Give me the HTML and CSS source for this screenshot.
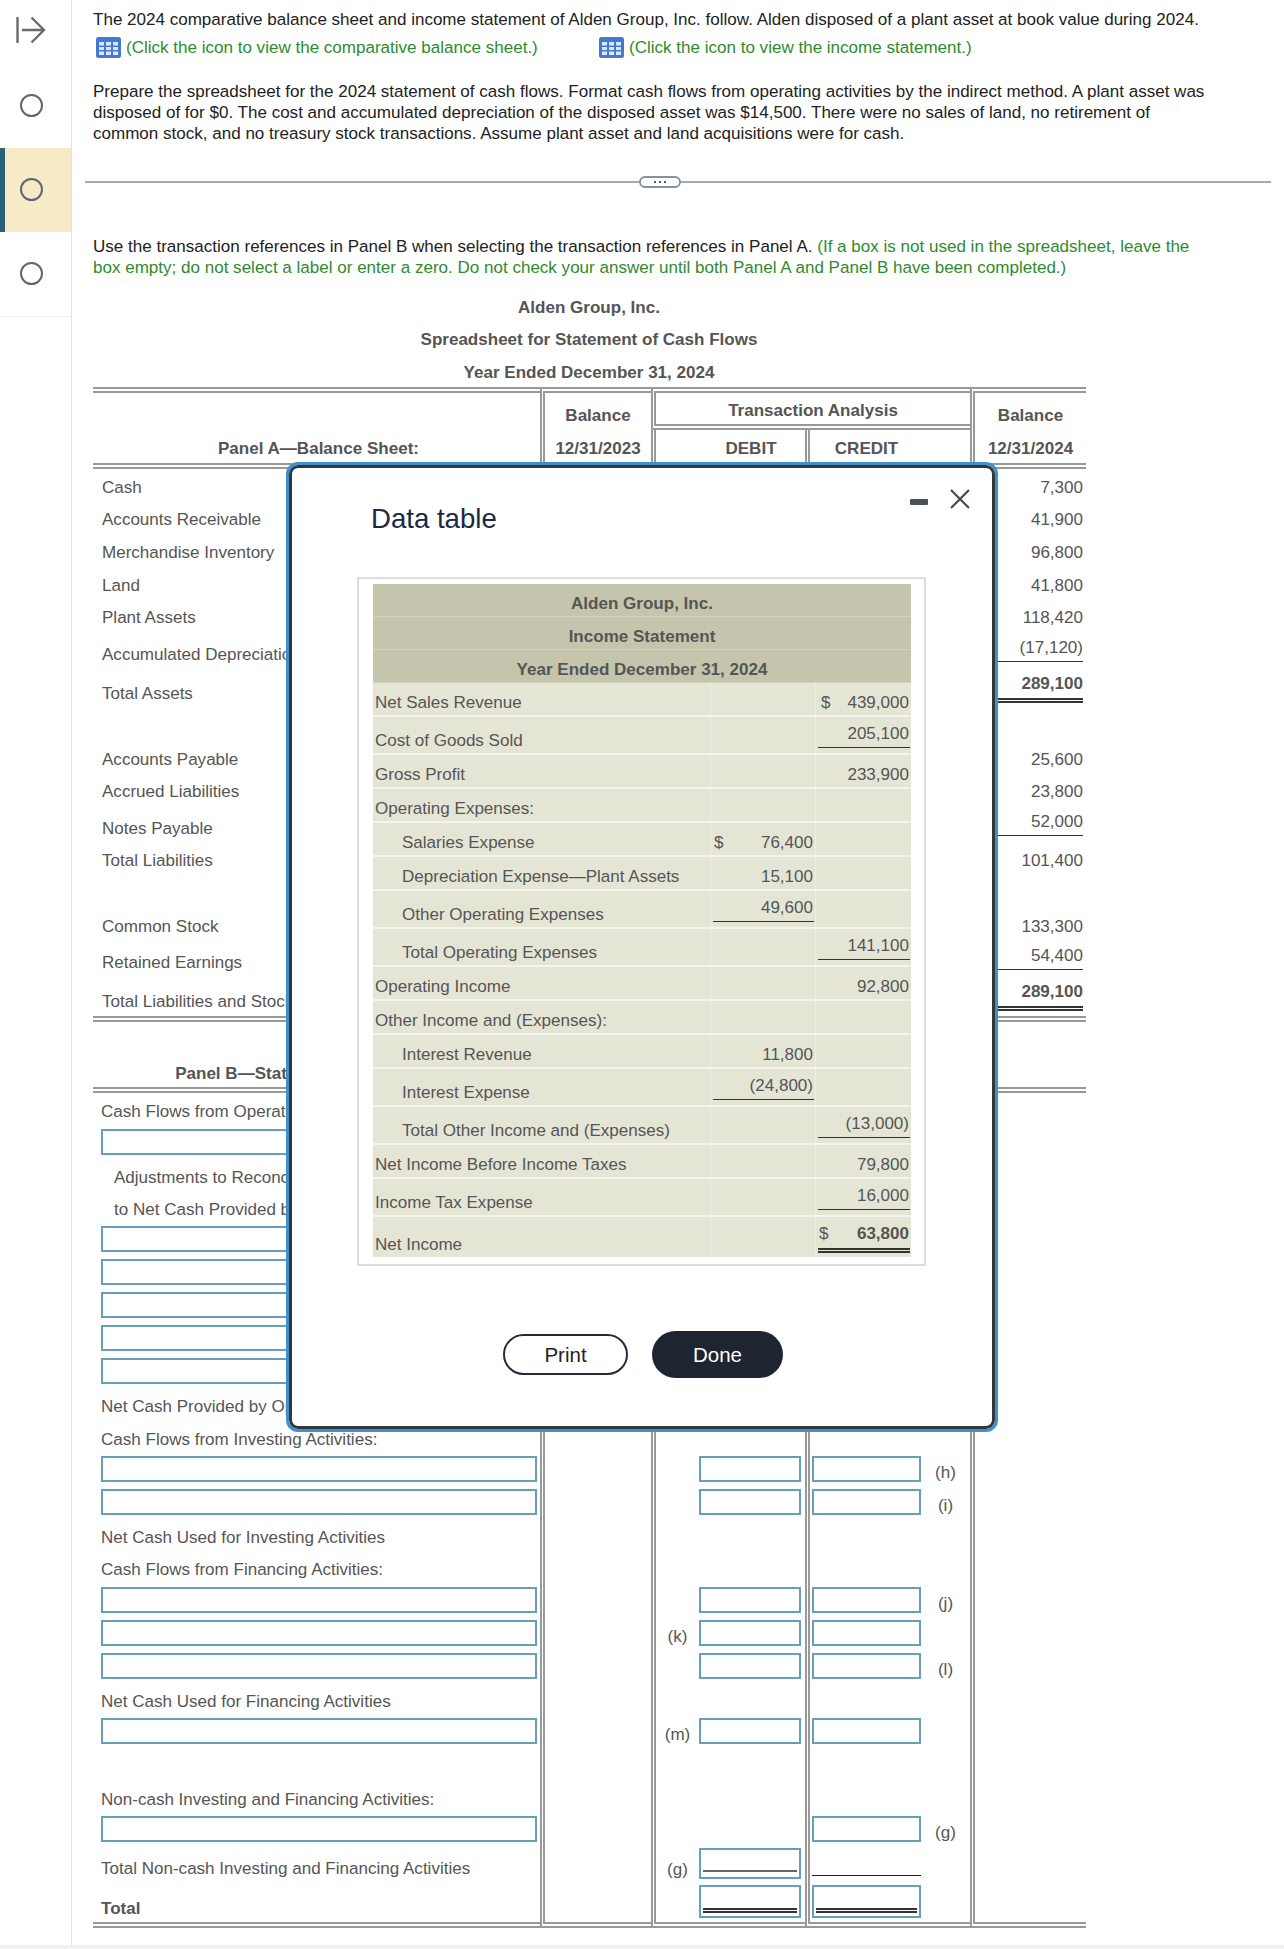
FILE: index.html
```html
<!DOCTYPE html>
<html lang="en">
<head>
  <meta charset="UTF-8">
  <title>Statement of Cash Flows Spreadsheet</title>
  <link rel="stylesheet" href="styles.css">
</head>
<body>
<div class="layout">

  <aside class="sidebar">
    <div class="side-toggle">
      <svg width="30" height="28" viewBox="0 0 30 28" fill="none" stroke="#666c72" stroke-width="2.4">
        <path d="M1.5 1V27M6 14H28M15.500 1.500L28 14L15.500 26.500"/>
      </svg>
    </div>
    <div class="side-item first"><span class="ring"></span></div>
    <div class="side-item active"><span class="ring"></span></div>
    <div class="side-item"><span class="ring"></span></div>
  </aside>

  <main class="content">
    <p class="intro">The 2024 comparative balance sheet and income statement of Alden Group, Inc. follow. Alden disposed of a plant asset at book value during 2024.</p>
    <div class="links">
      <div class="link link-first">
        <svg class="grid-icon" width="25" height="21" viewBox="0 0 25 21"><rect width="25" height="21" rx="2.500" fill="#4379d4"/><g fill="#dfe8fa"><rect x="3" y="5" width="5" height="3.500"/><rect x="10" y="5" width="5" height="3.500"/><rect x="17" y="5" width="5" height="3.500"/><rect x="3" y="10" width="5" height="3"/><rect x="10" y="10" width="5" height="3"/><rect x="17" y="10" width="5" height="3"/><rect x="3" y="14.500" width="5" height="3.500"/><rect x="10" y="14.500" width="5" height="3.500"/><rect x="17" y="14.500" width="5" height="3.500"/></g></svg>
        <span class="green">(Click the icon to view the comparative balance sheet.)</span>
      </div>
      <div class="link">
        <svg class="grid-icon" width="25" height="21" viewBox="0 0 25 21"><rect width="25" height="21" rx="2.500" fill="#4379d4"/><g fill="#dfe8fa"><rect x="3" y="5" width="5" height="3.500"/><rect x="10" y="5" width="5" height="3.500"/><rect x="17" y="5" width="5" height="3.500"/><rect x="3" y="10" width="5" height="3"/><rect x="10" y="10" width="5" height="3"/><rect x="17" y="10" width="5" height="3"/><rect x="3" y="14.500" width="5" height="3.500"/><rect x="10" y="14.500" width="5" height="3.500"/><rect x="17" y="14.500" width="5" height="3.500"/></g></svg>
        <span class="green">(Click the icon to view the income statement.)</span>
      </div>
    </div>

    <p class="prepare">Prepare the spreadsheet for the 2024 statement of cash flows. Format cash flows from operating activities by the indirect method. A plant asset was<br>disposed of for $0. The cost and accumulated depreciation of the disposed asset was $14,500. There were no sales of land, no retirement of<br>common stock, and no treasury stock transactions. Assume plant asset and land acquisitions were for cash.</p>

    <div class="divider">
      <span class="divider-line left"></span>
      <span class="pill"><i></i><i></i><i></i></span>
      <span class="divider-line"></span>
    </div>

    <p class="use-refs">Use the transaction references in Panel B when selecting the transaction references in Panel A. <span class="green">(If a box is not used in the spreadsheet, leave the<br>box empty; do not select a label or enter a zero. Do not check your answer until both Panel A and Panel B have been completed.)</span></p>

    <div class="sheet-title">
      <div>Alden Group, Inc.</div>
      <div>Spreadsheet for Statement of Cash Flows</div>
      <div>Year Ended December 31, 2024</div>
    </div>

    <table class="sheet">
      <colgroup>
        <col class="c-label"><col class="c-bal"><col class="c-debit"><col class="c-credit"><col class="c-bal2">
      </colgroup>
      <tr class="head-top">
        <th rowspan="2" class="top rule head-label">Panel A—Balance Sheet:</th>
        <th rowspan="2" class="top rule v head-stack"><div class="stack-a">Balance</div><div>12/31/2023</div></th>
        <th colspan="2" class="top rule v head-ta">Transaction Analysis</th>
        <th rowspan="2" class="top rule v head-stack"><div class="stack-a">Balance</div><div>12/31/2024</div></th>
      </tr>
      <tr class="head-sub">
        <th class="rule v head-dc head-debit">DEBIT</th>
        <th class="rule v head-dc head-credit">CREDIT</th>
      </tr>

      <tr class="h29"><td class="label">Cash</td><td class="v"></td><td class="v"></td><td class="v"></td><td class="v amt">7,300</td></tr>
      <tr class="h32"><td class="label">Accounts Receivable</td><td class="v"></td><td class="v"></td><td class="v"></td><td class="v amt">41,900</td></tr>
      <tr class="h33"><td class="label">Merchandise Inventory</td><td class="v"></td><td class="v"></td><td class="v"></td><td class="v amt">96,800</td></tr>
      <tr class="h33"><td class="label">Land</td><td class="v"></td><td class="v"></td><td class="v"></td><td class="v amt">41,800</td></tr>
      <tr class="h32"><td class="label">Plant Assets</td><td class="v"></td><td class="v"></td><td class="v"></td><td class="v amt">118,420</td></tr>
      <tr class="h37"><td class="label">Accumulated Depreciation—Plant Assets</td><td class="v"></td><td class="v"></td><td class="v"></td><td class="v amt"><div class="under">(17,120)</div></td></tr>
      <tr class="h39"><td class="label">Total Assets</td><td class="v"></td><td class="v"></td><td class="v"></td><td class="v amt"><div class="total">289,100</div></td></tr>
      <tr class="h33"><td></td><td class="v"></td><td class="v"></td><td class="v"></td><td class="v"></td></tr>
      <tr class="h33"><td class="label">Accounts Payable</td><td class="v"></td><td class="v"></td><td class="v"></td><td class="v amt">25,600</td></tr>
      <tr class="h32"><td class="label">Accrued Liabilities</td><td class="v"></td><td class="v"></td><td class="v"></td><td class="v amt">23,800</td></tr>
      <tr class="h37"><td class="label">Notes Payable</td><td class="v"></td><td class="v"></td><td class="v"></td><td class="v amt"><div class="under">52,000</div></td></tr>
      <tr class="h32"><td class="label">Total Liabilities</td><td class="v"></td><td class="v"></td><td class="v"></td><td class="v amt">101,400</td></tr>
      <tr class="h33"><td></td><td class="v"></td><td class="v"></td><td class="v"></td><td class="v"></td></tr>
      <tr class="h33"><td class="label">Common Stock</td><td class="v"></td><td class="v"></td><td class="v"></td><td class="v amt">133,300</td></tr>
      <tr class="h36"><td class="label">Retained Earnings</td><td class="v"></td><td class="v"></td><td class="v"></td><td class="v amt"><div class="under">54,400</div></td></tr>
      <tr class="h49"><td class="label rule pad4">Total Liabilities and Stockholders' Equity</td><td class="rule v"></td><td class="rule v"></td><td class="rule v"></td><td class="rule v amt pad4"><div class="total">289,100</div></td></tr>

      <tr class="h71"><td class="panel-b rule">Panel B—Statement of Cash Flows:</td><td class="rule v"></td><td class="rule v"></td><td class="rule v"></td><td class="rule v"></td></tr>
      <tr class="h29"><td class="label lb">Cash Flows from Operating Activities:</td><td class="v"></td><td class="v"></td><td class="v"></td><td class="v"></td></tr>
      <tr class="h37"><td><input class="box box-label"></td><td class="v"></td><td class="v"></td><td class="v"></td><td class="v"></td></tr>
      <tr class="h29"><td class="label indent">Adjustments to Reconcile Net Income</td><td class="v"></td><td class="v"></td><td class="v"></td><td class="v"></td></tr>
      <tr class="h32"><td class="label indent">to Net Cash Provided by Operating Activities:</td><td class="v"></td><td class="v"></td><td class="v"></td><td class="v"></td></tr>
      <tr class="h36"><td><input class="box box-label"></td><td class="v"></td><td class="v"></td><td class="v"></td><td class="v"></td></tr>
      <tr class="h33"><td><input class="box box-label"></td><td class="v"></td><td class="v"></td><td class="v"></td><td class="v"></td></tr>
      <tr class="h33"><td><input class="box box-label"></td><td class="v"></td><td class="v"></td><td class="v"></td><td class="v"></td></tr>
      <tr class="h33"><td><input class="box box-label"></td><td class="v"></td><td class="v"></td><td class="v"></td><td class="v"></td></tr>
      <tr class="h33"><td><input class="box box-label"></td><td class="v"></td><td class="v"></td><td class="v"></td><td class="v"></td></tr>
      <tr class="h29"><td class="label lb">Net Cash Provided by Operating Activities</td><td class="v"></td><td class="v"></td><td class="v"></td><td class="v"></td></tr>

      <tr class="h33"><td class="label lb">Cash Flows from Investing Activities:</td><td class="v"></td><td class="v"></td><td class="v"></td><td class="v"></td></tr>
      <tr class="h36"><td><input class="box box-label"></td><td class="v"></td>
        <td class="v"><div class="debit-entry"><span class="ref"></span><input class="box box-debit"></div></td>
        <td class="v"><div class="credit-entry"><input class="box box-credit"><span class="ref">(h)</span></div></td><td class="v"></td></tr>
      <tr class="h33"><td><input class="box box-label"></td><td class="v"></td>
        <td class="v"><div class="debit-entry"><span class="ref"></span><input class="box box-debit"></div></td>
        <td class="v"><div class="credit-entry"><input class="box box-credit"><span class="ref">(i)</span></div></td><td class="v"></td></tr>
      <tr class="h29"><td class="label lb">Net Cash Used for Investing Activities</td><td class="v"></td><td class="v"></td><td class="v"></td><td class="v"></td></tr>

      <tr class="h32"><td class="label lb">Cash Flows from Financing Activities:</td><td class="v"></td><td class="v"></td><td class="v"></td><td class="v"></td></tr>
      <tr class="h37"><td><input class="box box-label"></td><td class="v"></td>
        <td class="v"><div class="debit-entry"><span class="ref"></span><input class="box box-debit"></div></td>
        <td class="v"><div class="credit-entry"><input class="box box-credit"><span class="ref">(j)</span></div></td><td class="v"></td></tr>
      <tr class="h33"><td><input class="box box-label"></td><td class="v"></td>
        <td class="v"><div class="debit-entry"><span class="ref">(k)</span><input class="box box-debit"></div></td>
        <td class="v"><div class="credit-entry"><input class="box box-credit"><span class="ref"></span></div></td><td class="v"></td></tr>
      <tr class="h33"><td><input class="box box-label"></td><td class="v"></td>
        <td class="v"><div class="debit-entry"><span class="ref"></span><input class="box box-debit"></div></td>
        <td class="v"><div class="credit-entry"><input class="box box-credit"><span class="ref">(l)</span></div></td><td class="v"></td></tr>
      <tr class="h29"><td class="label lb">Net Cash Used for Financing Activities</td><td class="v"></td><td class="v"></td><td class="v"></td><td class="v"></td></tr>
      <tr class="h36"><td><input class="box box-label"></td><td class="v"></td>
        <td class="v"><div class="debit-entry"><span class="ref">(m)</span><input class="box box-debit"></div></td>
        <td class="v"><div class="credit-entry"><input class="box box-credit"><span class="ref"></span></div></td><td class="v"></td></tr>
      <tr class="h33"><td></td><td class="v"></td><td class="v"></td><td class="v"></td><td class="v"></td></tr>

      <tr class="h29"><td class="label lb">Non-cash Investing and Financing Activities:</td><td class="v"></td><td class="v"></td><td class="v"></td><td class="v"></td></tr>
      <tr class="h36"><td><input class="box box-label"></td><td class="v"></td><td class="v"></td>
        <td class="v"><div class="credit-entry"><input class="box box-credit"><span class="ref">(g)</span></div></td><td class="v"></td></tr>
      <tr class="h37"><td class="label lb pad4">Total Non-cash Investing and Financing Activities</td><td class="v"></td>
        <td class="v"><div class="debit-entry"><span class="ref ref-low">(g)</span><div class="box box-debit box-sub"><span class="sub-line"></span></div></div></td>
        <td class="v"><div class="credit-plain"></div></td><td class="v"></td></tr>
      <tr class="h45"><td class="label lb bold rule pad3">Total</td><td class="rule v"></td>
        <td class="rule v"><div class="debit-entry"><span class="ref"></span><div class="box box-debit box-tot"><span class="tot-line"></span></div></div></td>
        <td class="rule v"><div class="credit-entry"><div class="box box-credit box-tot"><span class="tot-line"></span></div><span class="ref"></span></div></td>
        <td class="rule v"></td></tr>
    </table>
  </main>
</div>

<!-- Data table popup, sits over the spreadsheet -->
<div class="modal">
  <div class="modal-head">
    <h2>Data table</h2>
    <div class="modal-tools">
      <span class="min-btn"></span>
      <svg width="20" height="20" viewBox="0 0 20 20" stroke="#414a56" stroke-width="2.200" fill="none"><path d="M1 1L19 19M19 1L1 19"/></svg>
    </div>
  </div>

  <div class="data-wrap">
    <table class="data">
      <colgroup><col class="d-label"><col class="d-debit"><col class="d-credit"></colgroup>
      <tr class="dh"><th colspan="3">Alden Group, Inc.</th></tr>
      <tr class="dh"><th colspan="3">Income Statement</th></tr>
      <tr class="dh"><th colspan="3">Year Ended December 31, 2024</th></tr>
      <tr class="d34"><td>Net Sales Revenue</td><td></td><td><div class="val"><span class="dollar">$</span><span>439,000</span></div></td></tr>
      <tr class="d38"><td>Cost of Goods Sold</td><td></td><td><div class="val line">205,100</div></td></tr>
      <tr class="d34"><td>Gross Profit</td><td></td><td><div class="val">233,900</div></td></tr>
      <tr class="d34"><td>Operating Expenses:</td><td></td><td></td></tr>
      <tr class="d34"><td class="sub">Salaries Expense</td><td><div class="val"><span>$</span><span>76,400</span></div></td><td></td></tr>
      <tr class="d34"><td class="sub">Depreciation Expense—Plant Assets</td><td><div class="val">15,100</div></td><td></td></tr>
      <tr class="d38"><td class="sub">Other Operating Expenses</td><td><div class="val line">49,600</div></td><td></td></tr>
      <tr class="d38"><td class="sub">Total Operating Expenses</td><td></td><td><div class="val line">141,100</div></td></tr>
      <tr class="d34"><td>Operating Income</td><td></td><td><div class="val">92,800</div></td></tr>
      <tr class="d34"><td>Other Income and (Expenses):</td><td></td><td></td></tr>
      <tr class="d34"><td class="sub">Interest Revenue</td><td><div class="val">11,800</div></td><td></td></tr>
      <tr class="d38"><td class="sub">Interest Expense</td><td><div class="val line">(24,800)</div></td><td></td></tr>
      <tr class="d38"><td class="sub">Total Other Income and (Expenses)</td><td></td><td><div class="val line">(13,000)</div></td></tr>
      <tr class="d34"><td>Net Income Before Income Taxes</td><td></td><td><div class="val">79,800</div></td></tr>
      <tr class="d38"><td>Income Tax Expense</td><td></td><td><div class="val line">16,000</div></td></tr>
      <tr class="d40"><td>Net Income</td><td></td><td><div class="val dbl"><span class="normal">$</span><span>63,800</span></div></td></tr>
    </table>
  </div>

  <div class="modal-actions">
    <button class="btn-print">Print</button>
    <button class="btn-done">Done</button>
  </div>
</div>

</body>
</html>
```

FILE: styles.css
```css
* {
  box-sizing: border-box;
}

html, body {
  margin: 0;
  padding: 0;
}

body {
  position: relative;
  height: 1949px;
  overflow: hidden;
  background: #f2f2f2;
  font-family: "Liberation Sans", Arial, sans-serif;
  font-size: 17.05px;
  color: #222;
}

.layout {
  display: flex;
  height: 1945px;
  background: #fff;
}

/* left question list */
.sidebar {
  width: 72px;
  flex: none;
  border-right: 1px solid #dfe3ea;
}

.side-toggle {
  height: 63px;
  padding: 16px 0 0 16px;
}

.side-toggle svg {
  display: block;
}

.side-item {
  height: 84px;
  display: flex;
  align-items: center;
  padding-left: 20px;
}

.side-item.first {
  height: 85px;
}

.side-item.active {
  padding-left: 15px;
  padding-bottom: 2px;
  border-left: 5px solid #2a6078;
  background: #f6ebc6;
}

.side-item:last-child {
  height: 85px;
  padding-bottom: 2px;
  border-bottom: 1px solid #eceef1;
}

.ring {
  width: 23px;
  height: 23px;
  border: 2.5px solid #5b6670;
  border-radius: 50%;
}

/* question text */
.content {
  flex: 1;
  padding: 9px 0 0 21px;
  line-height: 21px;
}

.content p {
  margin: 0;
}

.green {
  color: #2e8b2e;
}

.links {
  display: flex;
  margin-top: 6px;
  height: 23px;
}

.link {
  display: flex;
  align-items: center;
  gap: 5px;
  padding-left: 3px;
}

.link-first {
  width: 503px;
}

.grid-icon {
  flex: none;
}

.prepare {
  padding-top: 21.5px;
}

.divider {
  display: flex;
  align-items: center;
  width: 1186px;
  margin: 32px 0 0 -8px;
  height: 12px;
}

.divider-line {
  flex: 1;
  height: 2px;
  background: #a1abb6;
}

.divider-line.left {
  flex: none;
  width: 554px;
}

.pill {
  width: 42px;
  height: 12px;
  border: 2px solid #8592a0;
  border-radius: 6px;
  display: flex;
  align-items: center;
  justify-content: center;
  gap: 3px;
}

.pill i {
  width: 2px;
  height: 2px;
  background: #4a5a6a;
}

.use-refs {
  padding-top: 48px;
}

.sheet-title {
  width: 993px;
  margin-top: 13px;
  padding-right: 1px;
  text-align: center;
  font-weight: bold;
  color: #555;
  line-height: 20px;
}

.sheet-title div {
  height: 32.5px;
  padding-top: 7px;
}

/* spreadsheet */
.sheet {
  width: 993px;
  margin-top: -1px;
  table-layout: fixed;
  border-collapse: separate;
  border-spacing: 0;
  color: #555;
  line-height: 20px;
}

.c-label { width: 447px; }
.c-bal { width: 111px; }
.c-debit { width: 154px; }
.c-credit { width: 165px; }
.c-bal2 { width: 116px; }

.sheet td, .sheet th {
  padding: 0;
  vertical-align: bottom;
}

.sheet th {
  font-weight: bold;
  text-align: center;
}

.sheet .top {
  border-top: 6px double #999;
}

.sheet .rule {
  border-bottom: 6px double #999;
}

.sheet .v {
  border-left: 5px double #999;
}

.head-top { height: 43px; }
.head-sub { height: 39px; }

.sheet .head-label,
.sheet .head-stack,
.sheet .head-dc {
  padding-bottom: 4px;
}

.sheet .head-label {
  padding-left: 4px;
}

.sheet .head-ta {
  padding-bottom: 3px;
}

.sheet .head-debit {
  padding-left: 41px;
}

.sheet .head-credit {
  padding-right: 47px;
}

.stack-a {
  margin-bottom: 13px;
}

.h29 { height: 29px; }
.h32 { height: 32px; }
.h33 { height: 33px; }
.h36 { height: 36px; }
.h37 { height: 37px; }
.h39 { height: 39px; }
.h45 { height: 45px; }
.h49 { height: 49px; }
.h71 { height: 71px; }

.sheet .label {
  padding-left: 9px;
  white-space: nowrap;
  overflow: hidden;
}

.sheet .lb {
  padding-left: 8px;
}

.sheet .indent {
  padding-left: 21px;
}

.sheet .bold {
  font-weight: bold;
}

.sheet .pad4 {
  padding-bottom: 4px;
}

.sheet .pad3 {
  padding-bottom: 3px;
}

.sheet .panel-b {
  padding: 0 0 3px 5px;
  text-align: center;
  font-weight: bold;
  white-space: nowrap;
}

.sheet .amt {
  padding-right: 3px;
  text-align: right;
}

.under {
  margin: 0 0 3px 5px;
  padding-bottom: 3px;
  border-bottom: 1px solid #333;
}

.total {
  margin: 0 0 1px 5px;
  padding-bottom: 4px;
  border-bottom: 5px double #333;
  font-weight: bold;
}

.box {
  display: block;
  height: 26px;
  margin: 0 0 4px;
  padding: 0;
  background: #fff;
  border: 2px solid #659fba;
  border-radius: 0;
}

.box-label {
  width: 436px;
  margin-left: 8px;
}

.box-debit {
  flex: none;
  width: 102px;
}

.box-credit {
  flex: none;
  width: 109px;
  margin-left: 2px;
}

.debit-entry, .credit-entry {
  display: flex;
  align-items: center;
}

.ref {
  display: block;
  margin-top: 4px;
  text-align: center;
  color: #555;
}

.debit-entry .ref {
  flex: none;
  width: 43px;
}

.credit-entry .ref {
  flex: none;
  width: 49px;
}

.debit-entry .ref-low {
  margin-top: 9px;
}

.box-sub {
  height: 31px;
  display: flex;
  align-items: flex-end;
  padding: 0 2px 5px;
}

.sub-line {
  display: block;
  width: 100%;
  height: 2px;
  background: #666;
}

.box-tot {
  height: 33px;
  display: flex;
  align-items: flex-end;
  padding: 0 2px 3px;
}

.tot-line {
  display: block;
  width: 100%;
  border-top: 5px double #333;
}

.credit-plain {
  width: 109px;
  margin: 0 0 7px 2px;
  border-bottom: 1px solid #222;
}

/* data table popup */
.modal {
  position: absolute;
  left: 286px;
  top: 462px;
  width: 712px;
  height: 970px;
  background: #fff;
  border: 3px solid #3f90cc;
  border-radius: 12px;
  box-shadow: inset 0 0 0 3px #33373b;
  color: #555;
}

.modal-head {
  position: relative;
  height: 112px;
  padding: 36px 0 0 82px;
}

.modal-head h2 {
  margin: 0;
  font-size: 27.6px;
  font-weight: normal;
  line-height: 36px;
  color: #1a2a44;
}

.modal-tools {
  position: absolute;
  top: 24px;
  right: 25px;
  display: flex;
  align-items: center;
  gap: 22px;
}

.min-btn {
  width: 18px;
  height: 6px;
  margin-top: 5px;
  background: #4a5058;
  border-radius: 1px;
}

.data-wrap {
  width: 569px;
  height: 689px;
  margin-left: 68px;
  padding: 5px 13px 7px 14px;
  border: 2px solid #ddd;
}

.data {
  width: 538px;
  table-layout: fixed;
  border-collapse: separate;
  border-spacing: 0;
  background: #e5e5d5;
  line-height: 20px;
}

.d-label { width: 337px; }
.d-debit { width: 105px; }
.d-credit { width: 96px; }

.data th, .data td {
  padding: 0 0 2px;
  vertical-align: bottom;
}

.data th {
  height: 33px;
  background: #c5c5ad;
  border-bottom: 1px solid #d3d3bf;
  text-align: center;
  font-weight: bold;
}

.dh:nth-child(4) th {
  border-bottom-color: #f4f4ec;
}

.data td {
  border-bottom: 2px solid #f4f4ec;
  border-left: 1px solid #eeeee2;
}

.data td:first-child {
  padding-left: 2px;
  border-left: 0;
  white-space: nowrap;
}

.data tr:last-child td {
  border-bottom: 0;
}

.data td.sub {
  padding-left: 29px;
}

.d34 { height: 34px; }
.d38 { height: 38px; }
.d40 { height: 40px; }

.val {
  display: flex;
  justify-content: space-between;
  margin: 0 1px 0 2px;
  padding: 0 1px;
}

.val:not(:has(span)) {
  justify-content: flex-end;
}

.val .dollar {
  margin-left: 2px;
}

.val.line {
  margin-bottom: 3px;
  padding-bottom: 3px;
  border-bottom: 1px solid #333;
}

.val.dbl {
  margin-bottom: 2px;
  padding-bottom: 4px;
  border-bottom: 5px double #333;
  font-weight: bold;
}

.val .normal {
  font-weight: normal;
}

.modal-actions {
  display: flex;
  align-items: center;
  justify-content: center;
  gap: 24px;
  padding: 65px 0 0 2px;
}

.modal-actions button {
  font-family: "Liberation Sans", Arial, sans-serif;
  font-size: 20.5px;
  border-radius: 24px;
}

.btn-print {
  width: 125px;
  height: 41px;
  background: #fff;
  color: #222;
  border: 2px solid #222b3a;
}

.btn-done {
  width: 131px;
  height: 47px;
  background: #1e2430;
  color: #fff;
  border: 0;
}
```
